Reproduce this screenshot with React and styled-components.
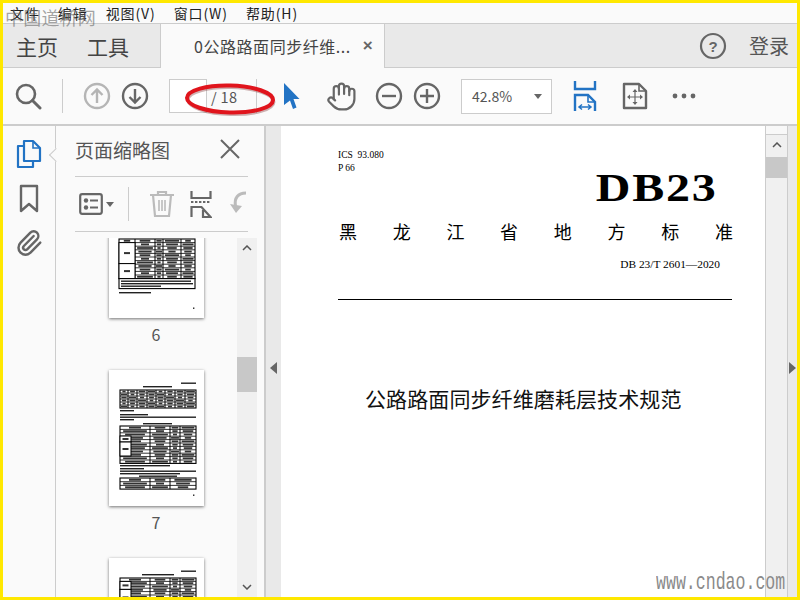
import React from 'react';
import styled, { createGlobalStyle } from 'styled-components';
import { Hand, Paperclip } from 'lucide-react';

const Global = createGlobalStyle`
  html, body { margin: 0; padding: 0; background: #fff; }
  * { box-sizing: border-box; }
`;

const cjk = `"Noto Sans CJK SC", "Noto Sans", sans-serif`;
const serif = `"Liberation Serif", "Noto Sans CJK SC", serif`;

const Frame = styled.div`
  position: relative;
  width: 800px;
  height: 600px;
  border: 3px solid #ffe800;
  background: #fafafa;
  display: flex;
  flex-direction: column;
  overflow: hidden;
  font-family: ${cjk};
  color: #444;
`;

const MenuBar = styled.div`
  height: 20px;
  flex: none;
  display: flex;
  align-items: center;
  gap: 18px;
  padding-left: 7px;
  font-size: 14px;
  letter-spacing: 0.9px;
  color: #222;
  background: #fafafa;
`;

const TabBar = styled.div`
  height: 45px;
  flex: none;
  display: flex;
  align-items: stretch;
  background: #e9e9e9;
  border-top: 1px solid #ccc;
  border-bottom: 1px solid #ccc;
`;

const HomeTabs = styled.div`
  width: 157px;
  display: flex;
  align-items: center;
  gap: 29px;
  padding-left: 13px;
  font-size: 21px;
  color: #444;
`;

const DocTab = styled.div`
  width: 225px;
  margin-bottom: -1px;
  display: flex;
  align-items: center;
  padding-left: 33px;
  font-size: 16px;
  letter-spacing: 0.55px;
  color: #444;
  background: #fafafa;
  border-left: 1px solid #ccc;
  border-right: 1px solid #ccc;
`;

const TabClose = styled.span`
  margin-left: 12px;
  font-size: 17px;
  font-weight: 700;
  color: #666;
  font-family: "Liberation Sans", sans-serif;
`;

const TabRight = styled.div`
  margin-left: auto;
  display: flex;
  align-items: center;
  gap: 22px;
  padding-right: 8px;
  font-size: 20px;
  color: #555;
`;

const ToolBar = styled.div`
  height: 58px;
  flex: none;
  display: flex;
  align-items: center;
  background: #fafafa;
  border-bottom: 2px solid #ccc;
`;

const Tool = styled.div`
  width: 32px;
  height: 32px;
  flex: none;
  margin-left: ${p => p.$ml || 0}px;
  display: flex;
  align-items: center;
  justify-content: center;
`;

const Divider = styled.div`
  width: 1px;
  height: 34px;
  flex: none;
  margin-left: ${p => p.$ml || 0}px;
  background: #ccc;
`;

const PageBox = styled.div`
  width: 38px;
  height: 34px;
  flex: none;
  margin-left: 18px;
  background: #fff;
  border: 1px solid #ccc;
`;

const PageTotal = styled.div`
  width: 45px;
  flex: none;
  margin-left: 4px;
  font-size: 14.5px;
  letter-spacing: 0.3px;
  color: #555;
`;

const ZoomSelect = styled.div`
  width: 91px;
  height: 35px;
  flex: none;
  margin-left: 18px;
  padding: 0 9px 0 10px;
  display: flex;
  align-items: center;
  justify-content: space-between;
  font-size: 14px;
  color: #555;
  background: #fff;
  border: 1px solid #ccc;
`;

const Caret = styled.span`
  width: 0;
  height: 0;
  border-left: 4px solid transparent;
  border-right: 4px solid transparent;
  border-top: 5px solid #666;
  margin: ${p => p.$m || 0};
`;

const Main = styled.div`
  flex: 1;
  min-height: 0;
  display: flex;
`;

const Rail = styled.div`
  position: relative;
  width: 53px;
  flex: none;
  display: flex;
  flex-direction: column;
  align-items: center;
  padding-top: 13px;
  gap: 15px;
  background: #fafafa;
  border-right: 1px solid #ccc;
`;

const RailNotch = styled.span`
  position: absolute;
  top: 24px;
  right: -6px;
  width: 10px;
  height: 10px;
  transform: rotate(45deg);
  background: #fafafa;
  border-left: 1px solid #ccc;
  border-bottom: 1px solid #ccc;
`;

const Panel = styled.div`
  width: 210px;
  flex: none;
  display: flex;
  flex-direction: column;
  background: #fafafa;
  border-right: 2px solid #ccc;
`;

const PanelHead = styled.div`
  height: 51px;
  flex: none;
  margin: 0 16px 0 19px;
  display: flex;
  align-items: center;
  justify-content: space-between;
  padding: 0 8px 4px 0;
  font-size: 19px;
  color: #555;
  border-bottom: 1px solid #ccc;
`;

const PanelTools = styled.div`
  height: 55px;
  flex: none;
  margin: 0 16px 0 19px;
  display: flex;
  align-items: center;
  overflow: hidden;
  border-bottom: 1px solid #ccc;
`;

const ThumbArea = styled.div`
  flex: 1;
  min-height: 0;
  margin-top: 6px;
  display: flex;
  padding-left: 19px;
  padding-right: 7px;
`;

const ThumbList = styled.div`
  flex: 1;
  overflow: hidden;
  display: flex;
  flex-direction: column;
  align-items: center;
`;

const Scrolled = styled.div`
  margin-top: -56px;
  display: flex;
  flex-direction: column;
  align-items: center;
`;

const ThumbPage = styled.div`
  width: 95px;
  height: 136px;
  flex: none;
  background: #fff;
  box-shadow: 0 1px 3px rgba(0, 0, 0, 0.55);
`;

const ThumbNum = styled.div`
  height: 52px;
  padding-top: 5px;
  font-size: 16px;
  line-height: 22px;
  color: #555;
`;

const VScroll = styled.div`
  width: ${p => p.$w}px;
  flex: none;
  display: flex;
  flex-direction: column;
  align-items: center;
  background: #f0f0f0;
`;

const ScrollBtn = styled.div`
  height: 20px;
  flex: none;
  display: flex;
  align-items: center;
  justify-content: center;
  margin-top: ${p => p.$auto ? 'auto' : 0};
`;

const ScrollThumb = styled.div`
  width: 100%;
  height: ${p => p.$h}px;
  flex: none;
  margin-top: ${p => p.$top}px;
  background: #c8c8c8;
`;

const Gutter = styled.div`
  width: ${p => p.$w}px;
  flex: none;
  display: flex;
  align-items: center;
  justify-content: center;
  padding-top: 13px;
  background: #e9e9e9;
`;

const Tri = styled.span`
  width: 0;
  height: 0;
  border-top: 6px solid transparent;
  border-bottom: 6px solid transparent;
  ${p => p.$right ? 'border-left: 7px solid #666;' : 'border-right: 7px solid #666;'}
`;

const Doc = styled.div`
  flex: 1;
  min-width: 0;
  background: #fff;
  padding: 23px 33px 0 57px;
  color: #000;
  font-family: ${serif};
`;

const IcsLine = styled.div`
  font-size: 9.5px;
  line-height: 13px;
`;

const Db = styled.div`
  margin-top: -11px;
  padding-right: 12px;
  text-align: right;
  font-size: 40px;
  line-height: 47px;
  font-weight: 700;
  letter-spacing: 1.5px;
  transform: scaleX(1.2);
  transform-origin: right center;
`;

const Province = styled.div`
  margin-top: 7px;
  padding-left: 1px;
  margin-right: -1px;
  display: flex;
  justify-content: space-between;
  font-family: ${cjk};
  font-size: 18px;
  line-height: 26px;
`;

const DocNo = styled.div`
  margin-top: 13px;
  padding-right: 12px;
  text-align: right;
  font-size: 11.4px;
  line-height: 14px;
`;

const Rule = styled.div`
  height: 1px;
  margin-top: 28px;
  background: #000;
`;

const DocTitle = styled.div`
  margin-top: 84px;
  padding-left: 27px;
  font-family: ${cjk};
  font-size: 21px;
  letter-spacing: 0.1px;
  line-height: 28px;
  color: #111;
`;

const DocScroll = styled(VScroll)`
  border-left: 1px solid #ccc;
  border-right: 1px solid #ccc;
`;

const ScrollCap = styled.div`
  width: 100%;
  height: 9px;
  flex: none;
  background: #f8f8f8;
  border-bottom: 1px solid #ccc;
`;

const Watermark = styled.div`
  position: absolute;
  left: 2px;
  top: 2px;
  font-size: 18px;
  line-height: 24px;
  letter-spacing: 0.2px;
  color: rgba(105, 105, 105, 0.6);
  pointer-events: none;
`;

const SiteMark = styled.div`
  position: absolute;
  right: 12px;
  bottom: 0;
  font-family: "Liberation Mono", monospace;
  font-size: 24px;
  line-height: 28px;
  color: #8a8a8a;
  transform: scaleX(0.69);
  transform-origin: right center;
  pointer-events: none;
`;

const Mark = styled.svg`
  position: absolute;
  left: 177px;
  top: 76px;
  pointer-events: none;
`;

const gray = '#666';
const blue = '#2273c4';

const Ico = ({ w = 28, h = 28, children }) => (
  <svg width={w} height={h} viewBox={`0 0 ${w} ${h}`} fill="none">{children}</svg>
);

const CircleArrow = ({ up, color }) => (
  <Ico>
    <circle cx="14" cy="14" r="12" stroke={color} strokeWidth="2.4" />
    <path d={up ? 'M14 21V8M8.5 13L14 7.5l5.5 5.5' : 'M14 7v13M8.5 15l5.5 5.5 5.5-5.5'} stroke={color} strokeWidth="2.4" />
  </Ico>
);

const CirclePM = ({ plus }) => (
  <Ico>
    <circle cx="14" cy="14" r="12" stroke={gray} strokeWidth="2.4" />
    <path d={plus ? 'M7 14h14M14 7v14' : 'M7 14h14'} stroke={gray} strokeWidth="2.4" />
  </Ico>
);

// tiny black table for the page thumbnails
const fakeTable = (x, y, w, colXs, rowH, rows) => {
  const out = [];
  const h = rowH * rows;
  const edges = [0, ...colXs, w];
  for (let r = 0; r < rows; r++) {
    for (let i = 0; i < edges.length - 1; i++) {
      const cw = edges[i + 1] - edges[i];
      const tw = cw * (0.4 + ((r * 3 + i * 5) % 4) * 0.13);
      out.push(<rect key={`t${y}-${r}-${i}`} x={x + edges[i] + (cw - tw) / 2} y={y + r * rowH + rowH * 0.25} width={tw} height={rowH * 0.5} fill="#333" />);
    }
  }
  for (let r = 1; r < rows; r++) {
    out.push(<line key={`r${y}-${r}`} x1={x} x2={x + w} y1={y + r * rowH} y2={y + r * rowH} stroke="#000" strokeWidth="0.8" />);
  }
  colXs.forEach((c, i) => {
    out.push(<line key={`c${y}-${i}`} x1={x + c} x2={x + c} y1={y} y2={y + h} stroke="#000" strokeWidth="1" />);
  });
  out.push(<rect key={`b${y}`} x={x} y={y} width={w} height={h} fill="none" stroke="#000" strokeWidth="1.1" />);
  return out;
};

const textLine = (x, y, w, k) => <rect key={k} x={x} y={y} width={w} height="1.4" fill="#222" />;

const mergedCell = (x, y, w, h, k) => (
  <g key={k}>
    <rect x={x} y={y} width={w} height={h} fill="#fff" stroke="#000" strokeWidth="1" />
    <rect x={x + w / 2 - 3} y={y + h / 2 - 1} width="6" height="2" fill="#333" />
  </g>
);

const PageSix = () => (
  <svg width="95" height="136" viewBox="0 0 95 136">
    {fakeTable(10, 57, 76, [16, 36, 44, 62], 3.6, 11)}
    {mergedCell(10, 60.6, 16, 21, 'm1')}
    {mergedCell(10, 81.6, 16, 15, 'm2')}
    <rect x="10" y="96.6" width="76" height="10" fill="#fff" stroke="#000" strokeWidth="1.1" />
    {textLine(12, 98.5, 70, 'a')}
    {textLine(12, 101, 72, 'b')}
    {textLine(12, 103.5, 40, 'd')}
    {textLine(10, 110, 32, 'c')}
    <rect x="84" y="125.5" width="1.4" height="1.4" fill="#222" />
  </svg>
);

const PageSeven = () => (
  <svg width="95" height="136" viewBox="0 0 95 136">
    {textLine(72, 12.5, 15, 'h')}
    {textLine(34, 16, 29, 't1')}
    {fakeTable(11, 20, 76, [8, 17, 27, 36, 45, 55, 65], 3, 6)}
    {textLine(11, 40, 14, 'l1')}
    {textLine(11, 44, 28, 'l2')}
    {textLine(11, 46.5, 76, 'l3')}
    {textLine(11, 49, 14, 'l4')}
    {textLine(34, 53, 29, 't2')}
    {fakeTable(11, 56, 76, [30, 50, 60], 3.4, 11)}
    {mergedCell(11, 66, 11, 6, 'm1')}
    {mergedCell(11, 72, 11, 14, 'm2')}
    {textLine(11, 95, 50, 'l5')}
    {textLine(11, 98, 24, 'l6')}
    {textLine(11, 100.5, 76, 'l7')}
    {textLine(11, 103, 60, 'l8')}
    {textLine(30, 105.5, 38, 't3')}
    {fakeTable(11, 108, 76, [30, 50], 3.7, 3)}
    <rect x="84" y="124.5" width="1.4" height="1.4" fill="#222" />
  </svg>
);

const PageEight = () => (
  <svg width="95" height="136" viewBox="0 0 95 136">
    {textLine(72, 12.5, 15, 'h')}
    {textLine(33, 16, 32, 't')}
    {fakeTable(11, 20, 76, [30, 50, 60], 3.4, 8)}
    {mergedCell(11, 23.4, 11, 8, 'm1')}
    {mergedCell(11, 31.4, 11, 16, 'm2')}
  </svg>
);

export default function App() {
  return (
    <Frame>
      <Global />
      <MenuBar>
        <span>文件</span>
        <span>编辑</span>
        <span>视图(V)</span>
        <span>窗口(W)</span>
        <span>帮助(H)</span>
      </MenuBar>
      <TabBar>
        <HomeTabs>
          <span>主页</span>
          <span>工具</span>
        </HomeTabs>
        <DocTab>
          <span>0公路路面同步纤维...</span>
          <TabClose>×</TabClose>
        </DocTab>
        <TabRight>
          <Ico w="28" h="28">
            <circle cx="14" cy="14" r="12" stroke={gray} strokeWidth="2.2" />
            <text x="14" y="19.5" textAnchor="middle" fontSize="15" fontWeight="700" fontFamily="Liberation Sans" fill={gray}>?</text>
          </Ico>
          <span>登录</span>
        </TabRight>
      </TabBar>
      <ToolBar>
        <Tool $ml={9}>
          <Ico>
            <circle cx="12" cy="12" r="9" stroke={gray} strokeWidth="2.6" />
            <path d="M18.5 18.5L26 26" stroke={gray} strokeWidth="3" strokeLinecap="round" />
          </Ico>
        </Tool>
        <Divider $ml={18} />
        <Tool $ml={18}><CircleArrow up color="#b5b5b5" /></Tool>
        <Tool $ml={6}><CircleArrow color={gray} /></Tool>
        <PageBox />
        <PageTotal>/ 18</PageTotal>
        <Divider />
        <Tool $ml={19}>
          <svg width="18" height="28" viewBox="0 0 18 28">
            <path d="M1 1L16.5 17H10.5L13.5 25.5L10 27L7 18.5L1 23Z" fill={blue} />
          </svg>
        </Tool>
        <Tool $ml={17}>
          <Hand size={31} color={gray} strokeWidth={1.7} />
        </Tool>
        <Tool $ml={16}><CirclePM /></Tool>
        <Tool $ml={6}><CirclePM plus /></Tool>
        <ZoomSelect>
          <span>42.8%</span>
          <Caret />
        </ZoomSelect>
        <Tool $ml={17}>
          <svg width="24" height="32" viewBox="0 0 24 32" fill="none">
            <path d="M2 1v8h20V1" stroke={blue} strokeWidth="2.4" />
            <path d="M2 31V15h13l7 7v9" stroke={blue} strokeWidth="2.4" />
            <path d="M15 15v7h7" stroke={blue} strokeWidth="1.6" />
            <path d="M6 27h12M9 24.5L6 27l3 2.5M15 24.5l3 2.5-3 2.5" stroke={blue} strokeWidth="1.5" />
          </svg>
        </Tool>
        <Tool $ml={18}>
          <svg width="26" height="28" viewBox="0 0 26 28" fill="none">
            <path d="M2 2h15l7 7v17H2z" stroke={gray} strokeWidth="2.4" strokeLinejoin="round" />
            <path d="M17 2v7h7" stroke={gray} strokeWidth="1.6" />
            <path d="M13 9v12M7 15h12" stroke={gray} strokeWidth="1.2" />
            <path d="M13 7l2.5 3h-5zM13 23l2.5-3h-5zM5 15l3-2.5v5zM21 15l-3-2.5v5z" fill={gray} />
          </svg>
        </Tool>
        <Tool $ml={17}>
          <svg width="24" height="6" viewBox="0 0 24 6">
            <circle cx="3" cy="3" r="2.4" fill={gray} />
            <circle cx="12" cy="3" r="2.4" fill={gray} />
            <circle cx="21" cy="3" r="2.4" fill={gray} />
          </svg>
        </Tool>
      </ToolBar>
      <Main>
        <Rail>
          <svg width="26" height="30" viewBox="0 0 26 30" fill="none">
            <path d="M8 7H2v21h15v-6" stroke={blue} strokeWidth="2.2" strokeLinejoin="round" />
            <path d="M8 2h9l7 7v13H8z" stroke={blue} strokeWidth="2.2" strokeLinejoin="round" />
            <path d="M17 2v7h7" stroke={blue} strokeWidth="1.6" />
          </svg>
          <svg width="20" height="30" viewBox="0 0 20 30" fill="none">
            <path d="M2 2h16v25l-8-7-8 7z" stroke={gray} strokeWidth="2.4" strokeLinejoin="round" />
          </svg>
          <Paperclip size={28} color={gray} strokeWidth={2.1} />
          <RailNotch />
        </Rail>
        <Panel>
          <PanelHead>
            <span>页面缩略图</span>
            <svg width="20" height="20" viewBox="0 0 20 20">
              <path d="M1 1l18 18M19 1L1 19" stroke={gray} strokeWidth="2" />
            </svg>
          </PanelHead>
          <PanelTools>
            <svg width="24" height="22" viewBox="0 0 24 22" fill="none" style={{ marginLeft: 4 }}>
              <rect x="1.2" y="1.2" width="21.6" height="19.6" rx="2" stroke={gray} strokeWidth="2.2" />
              <circle cx="7" cy="7.5" r="2.2" fill={gray} />
              <circle cx="7" cy="14.5" r="2.2" fill={gray} />
              <path d="M11 7.5h8M11 14.5h8" stroke={gray} strokeWidth="2.2" />
            </svg>
            <Caret $m="0 0 0 3px" />
            <Divider $ml={14} />
            <svg width="26" height="28" viewBox="0 0 26 28" fill="none" style={{ marginLeft: 20 }}>
              <path d="M1 5h24M9 5V2h8v3M4 5l2 21h14l2-21" stroke="#bbb" strokeWidth="2.2" />
              <path d="M10 10v11M13 10v11M16 10v11" stroke="#bbb" strokeWidth="1.6" />
            </svg>
            <svg width="22" height="28" viewBox="0 0 22 28" fill="none" style={{ marginLeft: 15 }}>
              <path d="M1.5 1v7h19V1" stroke={gray} strokeWidth="2.2" />
              <path d="M1 12h20" stroke={gray} strokeWidth="2.2" strokeDasharray="2.4 1.6" />
              <path d="M1.5 27V17h10l9 10H13v-7" stroke={gray} strokeWidth="2.2" />
            </svg>
            <svg width="17" height="26" viewBox="0 0 17 26" fill="none" style={{ marginLeft: 17, flex: 'none' }}>
              <path d="M17 2C9 2 5 7 6.5 15" stroke="#bbb" strokeWidth="3" />
              <path d="M1 13l6 9 6-7z" fill="#bbb" />
            </svg>
          </PanelTools>
          <ThumbArea>
            <ThumbList>
              <Scrolled>
                <ThumbPage><PageSix /></ThumbPage>
                <ThumbNum>6</ThumbNum>
                <ThumbPage><PageSeven /></ThumbPage>
                <ThumbNum>7</ThumbNum>
                <ThumbPage><PageEight /></ThumbPage>
              </Scrolled>
            </ThumbList>
            <VScroll $w={20}>
              <ScrollBtn>
                <svg width="10" height="6" viewBox="0 0 10 6"><path d="M1 5l4-4 4 4" fill="none" stroke="#555" strokeWidth="1.5" /></svg>
              </ScrollBtn>
              <ScrollThumb $top={99} $h={35} />
              <ScrollBtn $auto>
                <svg width="10" height="6" viewBox="0 0 10 6"><path d="M1 1l4 4 4-4" fill="none" stroke="#555" strokeWidth="1.5" /></svg>
              </ScrollBtn>
            </VScroll>
          </ThumbArea>
        </Panel>
        <Gutter $w={15}><Tri /></Gutter>
        <Doc>
          <IcsLine>ICS&nbsp;&nbsp;93.080</IcsLine>
          <IcsLine>P 66</IcsLine>
          <Db>DB23</Db>
          <Province>
            <span>黑</span><span>龙</span><span>江</span><span>省</span><span>地</span><span>方</span><span>标</span><span>准</span>
          </Province>
          <DocNo>DB 23/T 2601—2020</DocNo>
          <Rule />
          <DocTitle>公路路面同步纤维磨耗层技术规范</DocTitle>
        </Doc>
        <DocScroll $w={23}>
          <ScrollCap />
          <ScrollBtn>
            <svg width="10" height="6" viewBox="0 0 10 6"><path d="M1 5l4-4 4 4" fill="none" stroke="#555" strokeWidth="1.5" /></svg>
          </ScrollBtn>
          <ScrollThumb $top={2} $h={21} />
        </DocScroll>
        <Gutter $w={9}><Tri $right /></Gutter>
      </Main>
      <Watermark>中国道桥网</Watermark>
      <Mark width="100" height="40" viewBox="0 0 100 40" fill="none">
        <g transform="rotate(1.5 50 20)">
          <ellipse cx="50" cy="20" rx="43" ry="13.5" stroke="#8a4040" strokeOpacity="0.4" strokeWidth="3" transform="translate(1 2)" />
          <ellipse cx="50" cy="20" rx="43" ry="13.5" stroke="#e0141c" strokeWidth="4" />
        </g>
      </Mark>
      <SiteMark>www.cndao.com</SiteMark>
    </Frame>
  );
}
